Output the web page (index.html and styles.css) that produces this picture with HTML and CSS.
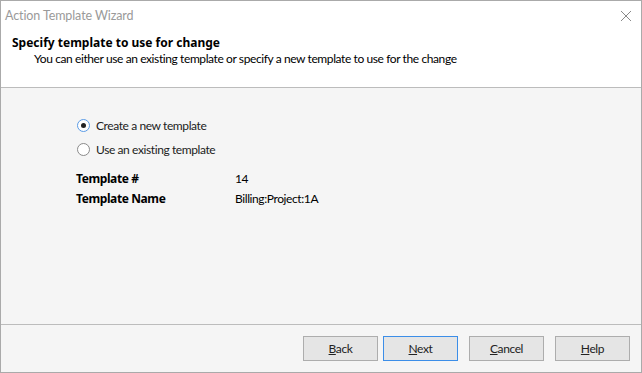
FILE: index.html
```html
<!DOCTYPE html>
<html lang="en">
<head>
  <meta charset="UTF-8">
  <title>Action Template Wizard</title>
  <link rel="stylesheet" href="styles.css">
</head>
<body>
  <div class="window">
    <div class="titlebar">
      <span class="title">Action Template Wizard</span>
      <svg class="close" width="12" height="12" viewBox="0 0 12 12">
        <path d="M1 1 L11 11 M11 1 L1 11" stroke="#8a8a8a" stroke-width="1" fill="none"/>
      </svg>
    </div>

    <div class="header">
      <div class="header-title">Specify template to use for change</div>
      <div class="header-sub">You can either use an existing template or specify a new template to use for the change</div>
    </div>

    <div class="content">
      <label class="radio-row">
        <span class="radio checked"></span>
        <span>Create a new template</span>
      </label>
      <label class="radio-row">
        <span class="radio"></span>
        <span>Use an existing template</span>
      </label>

      <div class="fields">
        <div class="field-label">Template #</div>
        <div class="field-value">14</div>
        <div class="field-label">Template Name</div>
        <div class="field-value">Billing:Project:1A</div>
      </div>
    </div>

    <div class="footer">
      <div class="nav-buttons">
        <button class="btn"><u>B</u>ack</button>
        <button class="btn default"><u>N</u>ext</button>
      </div>
      <button class="btn"><u>C</u>ancel</button>
      <button class="btn"><u>H</u>elp</button>
    </div>
  </div>
</body>
</html>
```

FILE: styles.css
```css
body {
  margin: 0;
  font-family: "Segoe UI", Lato, "Noto Sans", sans-serif;
  font-size: 12px;
  letter-spacing: -0.4px;
  color: #000;
  background-color: #fff;
}

.window {
  width: 642px;
  height: 373px;
  box-sizing: border-box;
  border: 1px solid #aaa;
  display: flex;
  flex-direction: column;
  background-color: #f5f5f5;
}

.titlebar {
  height: 28px;
  background-color: #fff;
  display: flex;
  align-items: center;
  justify-content: space-between;
  padding: 0 9px 0 4px;
}

.title {
  color: #9a9a9a;
  font-size: 12.5px;
  letter-spacing: -0.1px;
}

.close {
  margin-top: 1px;
}

.header {
  height: 59px;
  background-color: #fff;
  border-bottom: 1px solid #bcbcbc;
  padding: 6px 0 0 11px;
  box-sizing: border-box;
}

.header-title {
  font-family: "Segoe UI", "Noto Sans", sans-serif;
  font-weight: bold;
  letter-spacing: 0;
  line-height: 16px;
}

.header-sub {
  padding-left: 22px;
  line-height: 16px;
}

.content {
  flex: 1;
  padding: 25px 0 0 76px;
  border-bottom: 1px solid #bcbcbc;
}

.radio-row {
  display: flex;
  align-items: center;
  gap: 6px;
  height: 24px;
  color: #222;
}

.radio {
  width: 11px;
  height: 11px;
  border-radius: 50%;
  border: 1px solid #8a8a8a;
  background-color: #fff;
  box-sizing: content-box;
  position: relative;
}

.radio.checked {
  border-color: #5a9be6;
}

.radio.checked::after {
  content: "";
  position: absolute;
  left: 3px;
  top: 3px;
  width: 5px;
  height: 5px;
  border-radius: 50%;
  background-color: #222;
}

.fields {
  display: grid;
  grid-template-columns: 159px auto;
  row-gap: 4px;
  margin-top: 10px;
  margin-left: -1px;
  line-height: 16px;
}

.field-label {
  font-family: "Segoe UI", "Noto Sans", sans-serif;
  font-weight: bold;
}

.footer {
  height: 47px;
  display: flex;
  justify-content: flex-end;
  align-items: flex-start;
  gap: 11px;
  padding: 11px 11px 0 0;
  box-sizing: border-box;
}

.nav-buttons {
  display: flex;
  gap: 5px;
}

.btn {
  width: 75px;
  height: 25px;
  font-family: inherit;
  font-size: 12px;
  letter-spacing: inherit;
  color: #222;
  background-color: #e5e5e5;
  border: 1px solid #adadad;
  padding: 0;
}

.btn.default {
  border-color: #3c8ee8;
}
```
